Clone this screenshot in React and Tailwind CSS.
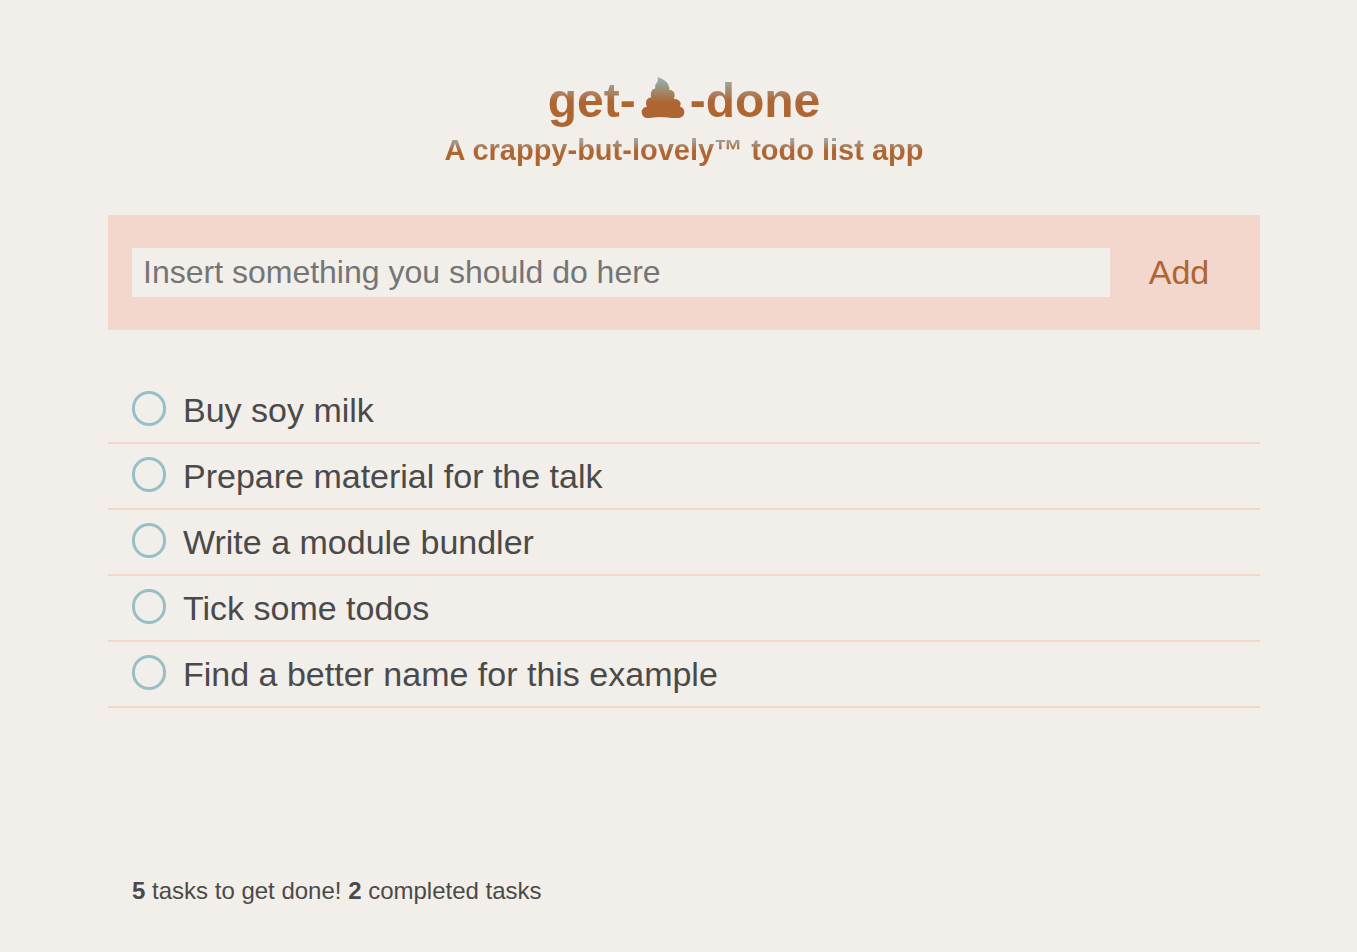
import { useState } from 'react'

const initialTasks = [
  { id: 1, text: 'Buy soy milk', done: false },
  { id: 2, text: 'Prepare material for the talk', done: false },
  { id: 3, text: 'Write a module bundler', done: false },
  { id: 4, text: 'Tick some todos', done: false },
  { id: 5, text: 'Find a better name for this example', done: false },
  { id: 6, text: 'Open the editor', done: true },
  { id: 7, text: 'Start a todo list', done: true },
]

function Poo(){
  return (
    <svg viewBox="34 22 132 126" className="w-11 h-[42px] mx-[5px]" aria-hidden="true">
      <defs>
        <linearGradient id="poo" gradientUnits="userSpaceOnUse" x1="0" y1="14" x2="0" y2="98">
          <stop offset="0" stopColor="#8fbfc7"/>
          <stop offset="1" stopColor="#ad6632"/>
        </linearGradient>
      </defs>
      <path
        fill="url(#poo)"
        d="M84 23C106 29 120 43 119 60C129 61 135 67 135 75C135 80 134 84 132 87C145 88 153 94 153 102C153 105 152 108 150 110C159 113 164 119 164 127C164 139 155 145 142 145C125 146 112 142 92 142C74 142 62 146 50 145C41 143 36 136 36 127C36 118 43 112 52 111C50 108 49 104 49 99C49 90 55 84 65 83C63 79 63 75 64 70C65 62 70 58 77 56C76 53 76 50 77 47C79 40 87 38 84 23Z"
      />
    </svg>
  )
}

export default function App(){
  const [tasks, setTasks] = useState(initialTasks)
  const [text, setText] = useState('')

  const pending = tasks.filter(t=> !t.done)
  const completed = tasks.length - pending.length

  const add = (e)=>{
    e.preventDefault()
    if(!text.trim()) return
    setTasks([...tasks, { id: Date.now(), text: text.trim(), done: false }])
    setText('')
  }

  const complete = (id)=> setTasks(tasks.map(t=> t.id === id ? { ...t, done: true } : t))

  return (
    <div className="min-h-screen flex flex-col bg-[#f2eee9] text-[#4a4a4a] pt-[73px] pb-[45px] pl-[108px] pr-[97px] font-['Liberation_Sans',Arial,sans-serif]">
      <header className="flex flex-col items-center font-bold text-transparent">
        <h1 className="flex items-start text-5xl leading-[56px] bg-clip-text bg-linear-to-b from-[#8fbfc7] to-[#ad6632] to-50%">
          <span>get-</span>
          <span className="pt-1"><Poo/></span>
          <span>-done</span>
        </h1>
        <h2 className="mt-[5px] text-[29px] leading-[33px] text-center bg-clip-text bg-linear-to-b from-[#8fbfc7] to-[#ad6632] to-50%">
          A crappy-but-lovely™ todo list app
        </h2>
      </header>

      <form onSubmit={add} className="mt-12 flex gap-3 bg-[#f4d7cc] px-6 py-[33px]">
        <input
          value={text}
          onChange={e=>setText(e.target.value)}
          aria-label="New task"
          placeholder="Insert something you should do here"
          className="flex-1 min-w-0 h-[49px] px-[11px] bg-[#f2eee9] text-[32px] placeholder:text-[#757575] outline-none"
        />
        <button className="w-[114px] h-[49px] text-[34px] leading-[49px] text-[#ad6632] cursor-pointer">Add</button>
      </form>

      <ul className="my-12">
        {pending.map(task=>(
          <li key={task.id} className="border-b-2 border-[#f4d7cc]">
            <label className="flex items-center gap-[17px] px-6 min-h-16 text-[34px] leading-[39px]">
              <input
                type="checkbox"
                checked={task.done}
                onChange={()=>complete(task.id)}
                className="appearance-none shrink-0 w-[34px] h-[35px] mb-1 rounded-full border-3 border-[#97bfc6] cursor-pointer"
              />
              {task.text}
            </label>
          </li>
        ))}
      </ul>

      <footer className="mt-auto px-6 text-2xl">
        <strong>{pending.length}</strong> tasks to get done! <strong>{completed}</strong> completed tasks
      </footer>
    </div>
  )
}
